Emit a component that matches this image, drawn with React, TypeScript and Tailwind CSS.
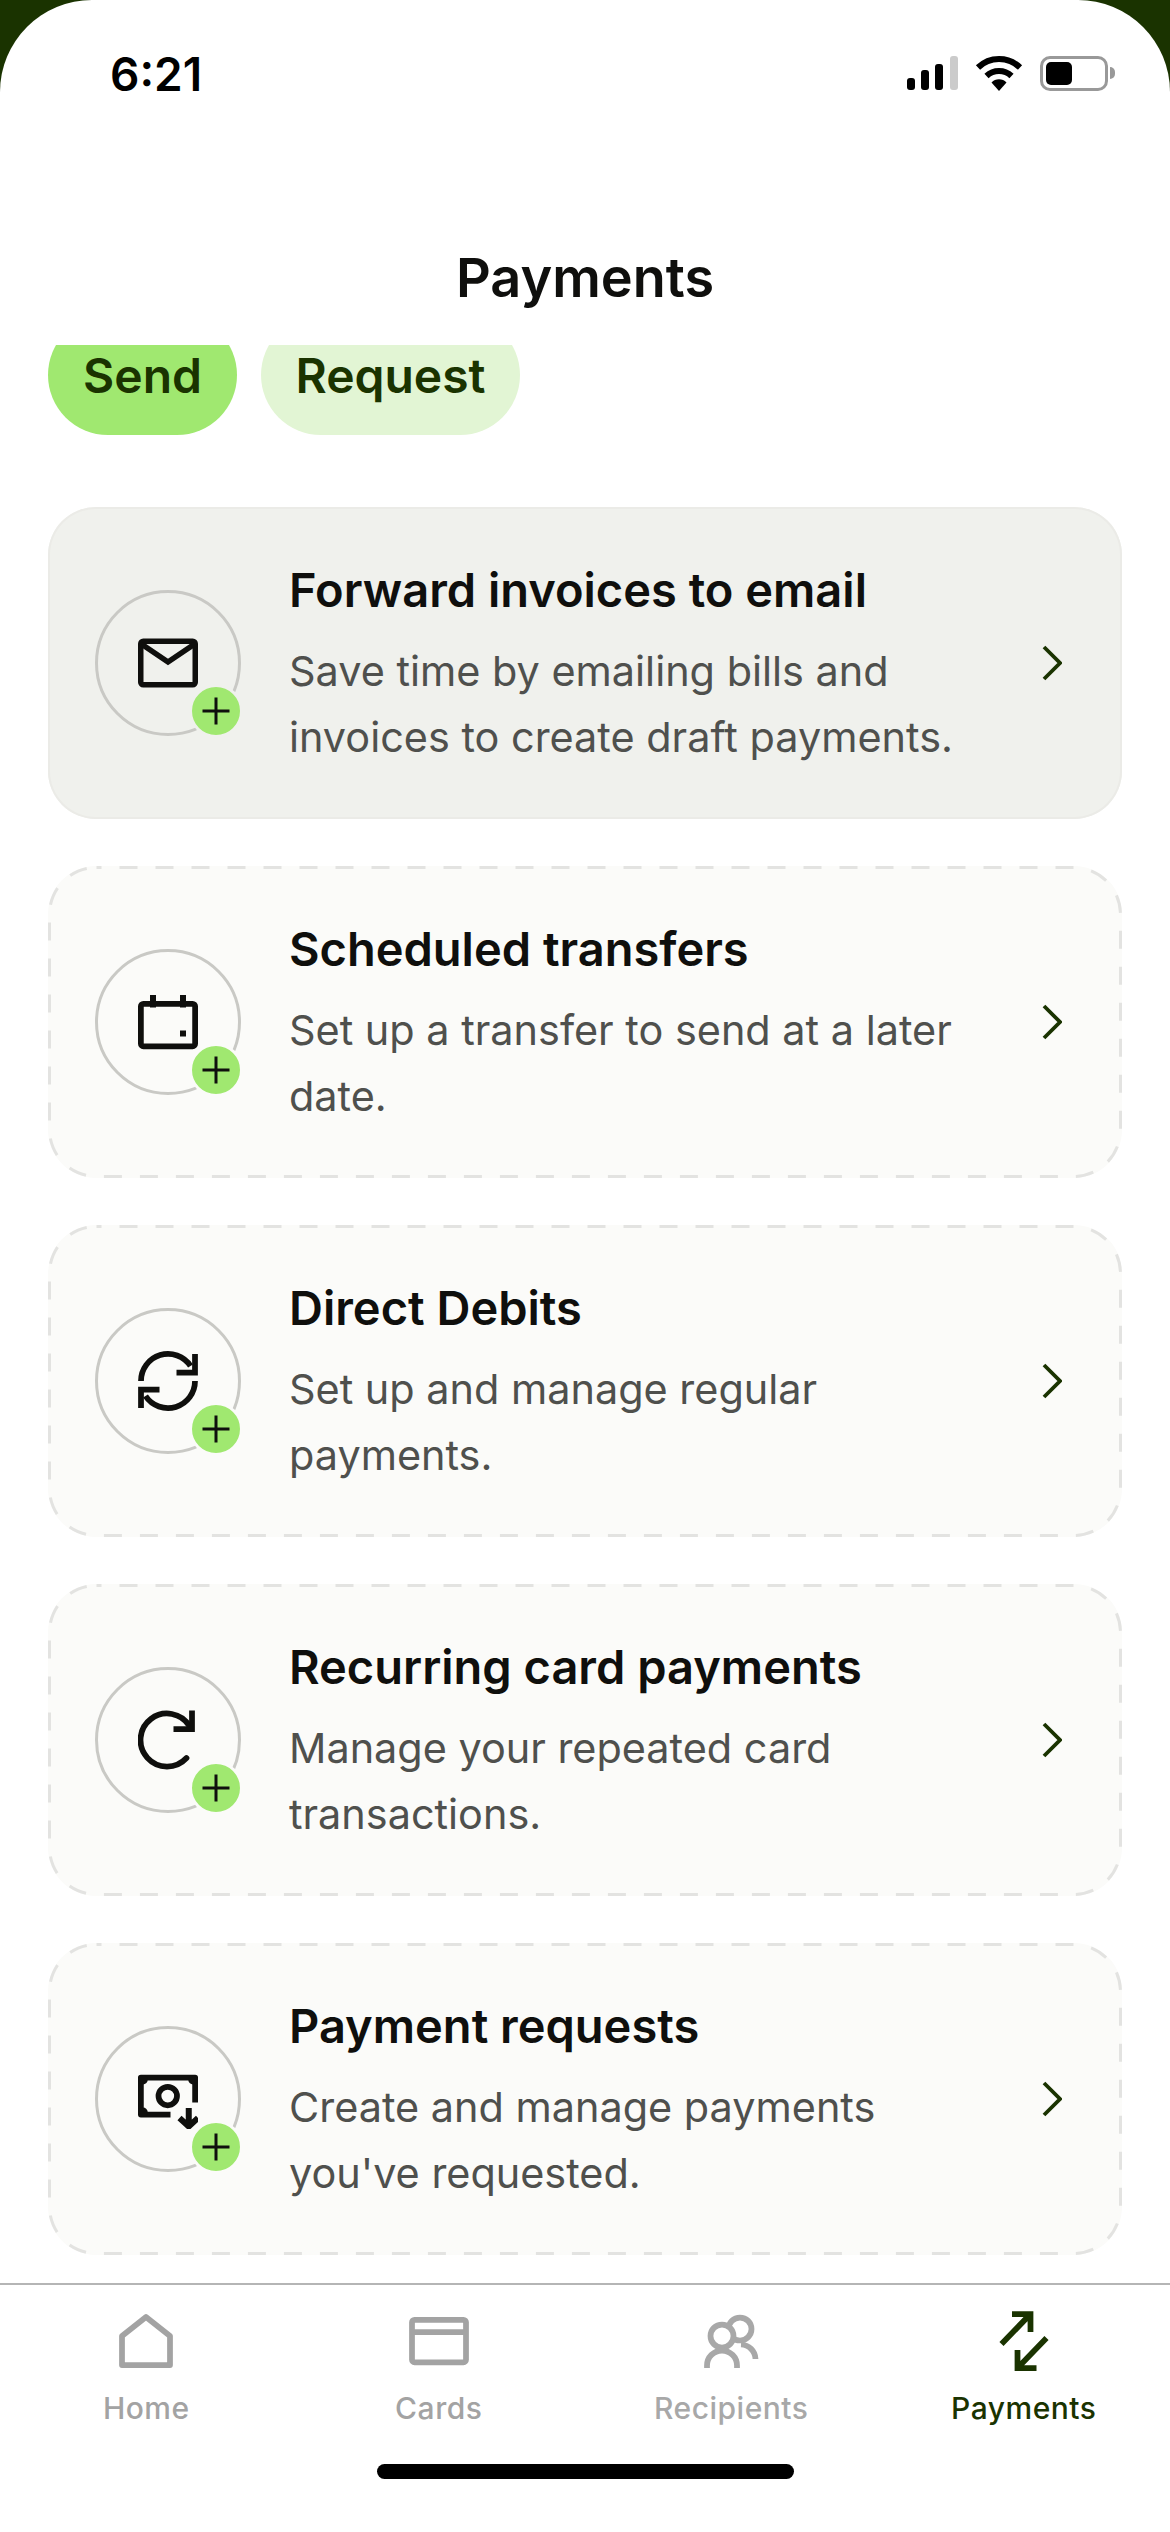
import React from 'react'

const font = { fontFamily: 'Inter, "Noto Sans", sans-serif' }

type CardData = {
  title: string
  lines: string[]
  icon: React.ReactNode
  solid?: boolean
}

const MailIcon = () => (
  <svg viewBox="0 0 24 24" className="h-[60px] w-[60px]" fill="none" stroke="currentColor" strokeWidth="2.2">
    <rect x="1.1" y="3.3" width="21.8" height="17.4" rx="1" strokeLinejoin="round" />
    <path d="M1.5 4.5 12 11.6 22.5 4.5" />
  </svg>
)

const CalendarIcon = () => (
  <svg viewBox="0 0 24 24" className="h-[60px] w-[60px]" fill="none" stroke="currentColor" strokeWidth="2.3">
    <rect x="1.15" y="4.7" width="21.7" height="17" rx="1" />
    <path d="M6 1.2v5M18 1.2v5" strokeWidth="2.4" />
    <rect x="16.8" y="15.4" width="2.4" height="2.4" fill="currentColor" stroke="none" />
  </svg>
)

const SyncIcon = () => (
  <svg viewBox="0 0 24 24" className="h-[60px] w-[60px]" fill="none" stroke="currentColor" strokeWidth="2.3">
    <path d="M1.2 12A10.8 10.8 0 0 1 21 6" />
    <path d="M22.8 1.2v7.4h-7.4" />
    <path d="M22.8 12A10.8 10.8 0 0 1 3 18" />
    <path d="M1.2 22.8v-7.4h7.4" />
  </svg>
)

const RepeatIcon = () => (
  <svg viewBox="0 0 24 24" className="h-[60px] w-[60px]" fill="none" stroke="currentColor" strokeWidth="2.3">
    <path d="M19.4 19.2A10.6 10.6 0 1 1 20.6 6.4" strokeLinecap="round" />
    <path d="M21.6 0.2v7.4h-7.4" />
  </svg>
)

const MoneyIcon = () => (
  <svg viewBox="0 0 24 24" className="h-[60px] w-[60px]" fill="none" stroke="currentColor" strokeWidth="2.3">
    <path d="M13 18.2H1.15V3.4h21.7v10" strokeLinejoin="round" />
    <circle cx="11.9" cy="10.8" r="3.7" />
    <circle cx="2" cy="4.3" r="1.9" fill="currentColor" stroke="none" />
    <circle cx="22" cy="4.3" r="1.9" fill="currentColor" stroke="none" />
    <circle cx="2" cy="17.3" r="1.9" fill="currentColor" stroke="none" />
    <path d="M20.3 15.6v6.6M16.6 19.6l3.7 3.4 3.7-3.4" strokeWidth="2.4" />
  </svg>
)

const cards: CardData[] = [
  {
    title: 'Forward invoices to email',
    lines: ['Save time by emailing bills and', 'invoices to create draft payments.'],
    icon: <MailIcon />,
    solid: true,
  },
  {
    title: 'Scheduled transfers',
    lines: ['Set up a transfer to send at a later', 'date.'],
    icon: <CalendarIcon />,
  },
  {
    title: 'Direct Debits',
    lines: ['Set up and manage regular', 'payments.'],
    icon: <SyncIcon />,
  },
  {
    title: 'Recurring card payments',
    lines: ['Manage your repeated card', 'transactions.'],
    icon: <RepeatIcon />,
  },
  {
    title: 'Payment requests',
    lines: ['Create and manage payments', "you've requested."],
    icon: <MoneyIcon />,
  },
]

const StatusBar = () => (
  <div className="flex h-[150px] items-start justify-between pl-[110px] pr-[55px] pt-[52px]">
    <span className="text-[46px] leading-[44px] font-semibold text-black">6:21</span>
    <div className="mt-[3px] flex items-center gap-[17px]">
      <svg width="51" height="34" viewBox="0 0 51 34">
        <rect x="0" y="22" width="8" height="12" rx="3" fill="#000" />
        <rect x="14" y="14" width="8" height="20" rx="3" fill="#000" />
        <rect x="28" y="8" width="8" height="26" rx="3" fill="#000" />
        <rect x="43" y="0" width="8" height="34" rx="3" fill="#cbcbcb" />
      </svg>
      <svg width="48" height="36" viewBox="0 0 48 36" fill="none" stroke="#000" strokeWidth="6">
        <path d="M3 12.5A30 30 0 0 1 45 12.5" />
        <path d="M11.5 21A18 18 0 0 1 36.5 21" />
        <path d="M16.5 27.5A10.5 10.5 0 0 1 31.5 27.5L24 36Z" fill="#000" stroke="none" />
      </svg>
      <div className="flex items-center gap-[2px]">
        <div className="h-[35px] w-[68px] rounded-[10px] border-[3px] border-[#999999] p-[3px]">
          <div className="h-full w-[26px] rounded-[5px] bg-black" />
        </div>
        <div className="h-[12px] w-[5px] rounded-r-full bg-[#999999]" />
      </div>
    </div>
  </div>
)

const PaymentCard = ({ card }: { card: CardData }) => (
  <div
    className={`relative flex h-[312px] items-center rounded-[48px] pl-[47px] pr-[60px] ${
      card.solid ? 'bg-[#f0f1ed] shadow-[inset_0_0_0_2px_#ebebe7]' : 'bg-[#fbfbf9]'
    }`}
  >
    {!card.solid && (
      <svg className="absolute inset-0" width="1074" height="312" fill="none">
        <rect
          x="1.5"
          y="1.5"
          width="1071"
          height="309"
          rx="47"
          stroke="#e3e3e1"
          strokeWidth="3"
          strokeDasharray="18 18"
          strokeDashoffset="-23"
        />
      </svg>
    )}
    <div className="relative flex h-[146px] w-[146px] shrink-0 items-center justify-center rounded-full border-[3px] border-[#c9c9c5] text-[#0f0f0d]">
      {card.icon}
      <div
        className={`absolute right-[-5px] bottom-[-5px] flex h-[54px] w-[54px] items-center justify-center rounded-full border-[3px] bg-[#a0e870] ${
          card.solid ? 'border-[#f0f1ed]' : 'border-[#fbfbf9]'
        }`}
      >
        <svg width="28" height="28" viewBox="0 0 28 28" stroke="#0f0f0d" strokeWidth="3">
          <path d="M14 0.5v27M0.5 14h27" />
        </svg>
      </div>
    </div>
    <div className="ml-[48px] flex-1 pt-[3px]">
      <div className="text-[47px] leading-[60px] font-semibold text-[#0f0f0d]">{card.title}</div>
      <div className="mt-[18px] text-[41.4px] leading-[66px] text-[#4f504d]">
        {card.lines.map(line => (
          <div key={line}>{line}</div>
        ))}
      </div>
    </div>
    <svg width="20" height="36" viewBox="0 0 20 36" fill="none" stroke="#1a3300" strokeWidth="3.8" className="shrink-0">
      <path d="M2 2l16 16L2 34" />
    </svg>
  </div>
)

const TabBar = () => {
  const gray = '#a3a3a3'
  const tabs = [
    {
      label: 'Home',
      color: gray,
      icon: <path d="M12 2.4 2.4 10v11.6h19.2V10Z" strokeLinejoin="round" />,
    },
    {
      label: 'Cards',
      color: gray,
      icon: (
        <>
          <rect x="1.2" y="3.5" width="21.6" height="17" rx="1" />
          <path d="M1 8.4h22" />
        </>
      ),
    },
    {
      label: 'Recipients',
      color: '#a8a8a8',
      icon: (
        <>
          <circle cx="15.6" cy="7.2" r="4.6" />
          <path d="M16 13.4a6 6 0 0 1 5.8 5.8" />
          <circle cx="8.4" cy="10" r="4.6" fill="#fff" />
          <path d="M2.4 22.8v-1a6 6 0 0 1 12 0v1" fill="#fff" />
        </>
      ),
    },
    {
      label: 'Payments',
      color: '#1a3300',
      icon: (
        <>
          <path d="M7.2 1.2h7.4v7.2M14.6 1.2 3 13.2" />
          <path d="M17 22.8H9.4v-7.2M9.4 22.8 21 10.8" />
        </>
      ),
    },
  ]
  return (
    <div className="h-[249px] border-t-2 border-[#b5b5b5]">
      <div className="grid grid-cols-4 pt-[26px]">
        {tabs.map(tab => (
          <div key={tab.label} className="flex flex-col items-center" style={{ color: tab.color }}>
            <svg viewBox="0 0 24 24" className="h-[60px] w-[60px]" fill="none" stroke="currentColor" strokeWidth="2.3">
              {tab.icon}
            </svg>
            <span className="mt-[17px] text-[30px] leading-[40px] font-medium tracking-[0.5px]">{tab.label}</span>
          </div>
        ))}
      </div>
      <div className="mx-auto mt-[36px] h-[15px] w-[417px] rounded-full bg-black" />
    </div>
  )
}

export default function App() {
  return (
    <div className="h-[2532px] w-[1170px] overflow-hidden bg-[#1a3300]" style={font}>
      <div className="flex h-full flex-col rounded-t-[92px] bg-white">
        <StatusBar />
        <div className="h-[195px] pt-[94px] text-center text-[54px] leading-[68px] font-semibold text-[#0f0f0d]">
          Payments
        </div>
        {/* pills are cut off by the header on top */}
        <div className="flex h-[90px] gap-[24px] overflow-hidden pl-[48px]">
          <div className="-mt-[30px] flex h-[120px] w-[189px] items-center justify-center rounded-full bg-[#a0e870] pt-[2px] text-[48px] font-semibold text-[#1a3300]">
            Send
          </div>
          <div className="-mt-[30px] flex h-[120px] w-[259px] items-center justify-center rounded-full bg-[#e2f5d4] pt-[2px] text-[48px] font-semibold text-[#1a3300]">
            Request
          </div>
        </div>
        <div className="flex flex-col gap-[47px] px-[48px] pt-[72px]">
          {cards.map(card => (
            <PaymentCard key={card.title} card={card} />
          ))}
        </div>
        <div className="mt-auto">
          <TabBar />
        </div>
      </div>
    </div>
  )
}
